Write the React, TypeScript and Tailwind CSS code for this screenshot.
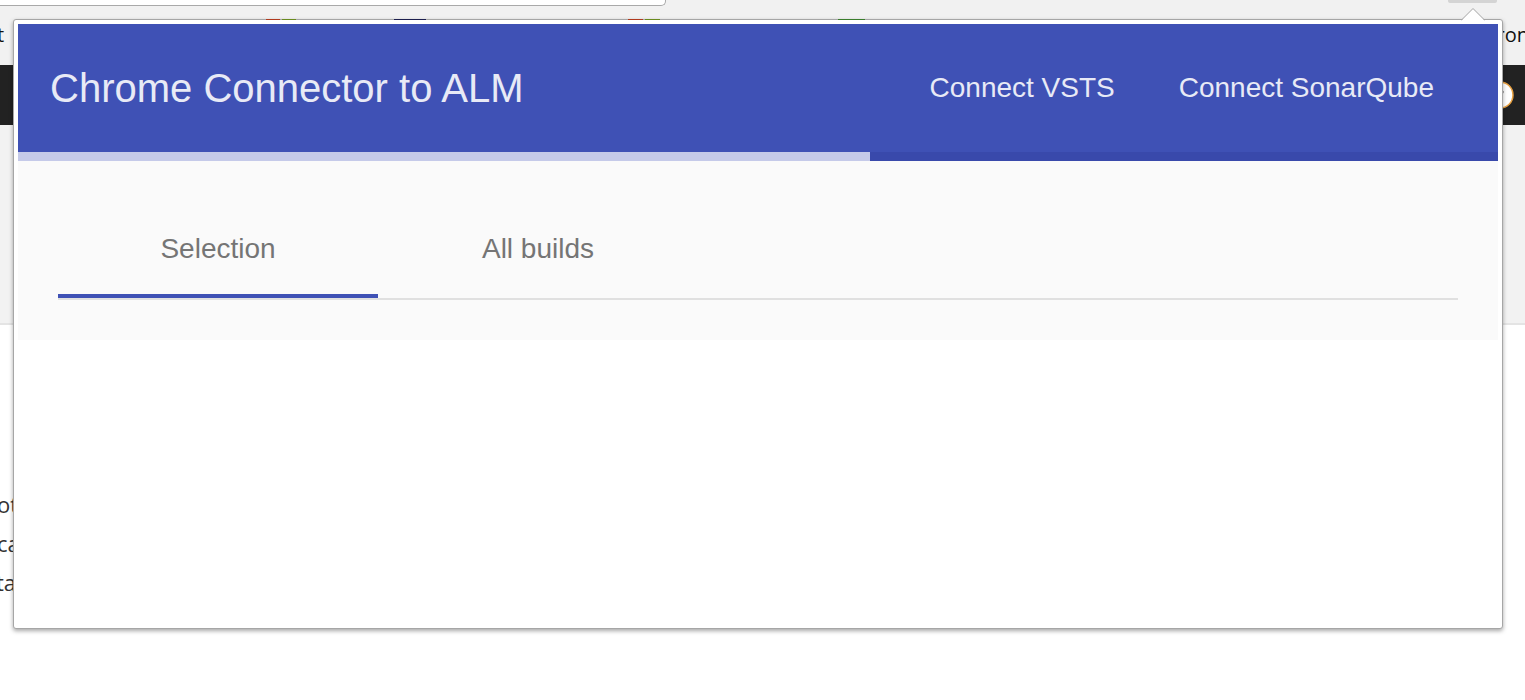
import React from "react";

export default function App() {
  return (
    <div className="relative w-[1525px] h-[700px] overflow-hidden bg-white font-['Liberation_Sans',Arial,sans-serif]">
      {/* background page */}
      <div className="flex flex-col">
        <div className="h-[65px] bg-[#f1f1f1] flex flex-col">
          <div className="w-[666px] h-[6px] bg-white border-b border-r border-[#a9a9a9] rounded-br-[5px]" />
          <div className="flex justify-between items-center mt-[17px] text-[20px] leading-[24px] text-[#111] font-['Open_Sans',sans-serif]">
            <span className="-ml-[3px]">t</span>
            <span className="-mr-[4px]">ron</span>
          </div>
        </div>
        <div className="h-[60px] bg-[#222222] flex justify-end items-center">
          <svg width="30" height="30" viewBox="0 0 30 30" className="mr-[10px]">
            <circle cx="15" cy="15" r="13" fill="#ffffff" stroke="#e8a040" strokeWidth="1.5" />
            <path d="M8 11 a5 5 0 0 1 9 1 c0 3 -4 3 -4 6" fill="none" stroke="#222" strokeWidth="3" />
          </svg>
        </div>
        <div className="h-[200px] bg-[#f2f2f2] border-b-2 border-[#e4e4e4]" />
        <div className="pt-[160px] text-[22px] leading-[39px] text-[#333] font-['Open_Sans',sans-serif] flex flex-col">
          <span className="-ml-[3px]">ot</span>
          <span className="-ml-[3px]">ca</span>
          <span className="-ml-[4px]">ta</span>
        </div>
      </div>

      {/* toolbar button behind popup */}
      <div className="absolute left-[1448px] top-0 w-[49px] h-[3px] bg-[#d4d4d4] rounded-b-[2px]" />

      {/* popup */}
      <div className="absolute left-[13px] top-[19px] w-[1490px] h-[610px] bg-white border border-[#a6a6a6] rounded-[3px] p-[4px] shadow-[0_2px_4px_rgba(0,0,0,0.35)] flex flex-col">
        {/* icon tips peeking over border */}
        <span className="absolute -top-[1px] left-[252px] w-[14px] h-[1px] bg-[#b03a1e]" />
        <span className="absolute -top-[1px] left-[268px] w-[14px] h-[1px] bg-[#6a8a1e]" />
        <span className="absolute -top-[1px] left-[380px] w-[32px] h-[1px] bg-[#1c1f4e]" />
        <span className="absolute -top-[1px] left-[614px] w-[15px] h-[1px] bg-[#b03a1e]" />
        <span className="absolute -top-[1px] left-[631px] w-[15px] h-[1px] bg-[#6a8a1e]" />
        <span className="absolute -top-[1px] left-[824px] w-[27px] h-[1px] bg-[#3a7d2c]" />
        {/* arrow */}
        <svg width="24" height="13" viewBox="0 0 24 13" className="absolute -top-[12px] left-[1447px]">
          <path d="M0 13 L12 1 L24 13 Z" fill="#ffffff" />
          <path d="M0 12.5 L12 0.5 L24 12.5" fill="none" stroke="#a6a6a6" strokeWidth="1" />
        </svg>

        <header className="h-[128px] bg-[#3f51b5] flex items-center justify-between px-[32px] text-[#e8eaf6]">
          <h1 className="text-[40px] leading-[46px]">Chrome Connector to ALM</h1>
          <nav className="flex items-center">
            <a className="px-[32px] text-[28px] leading-[32px]">Connect VSTS</a>
            <a className="px-[32px] text-[28px] leading-[32px]">Connect SonarQube</a>
          </nav>
        </header>
        <div className="h-[9px] flex">
          <div className="w-[852px] bg-[#c5cae9]" />
          <div className="flex-1 bg-[#3949ab]" />
        </div>
        <div className="bg-[#fafafa] px-[40px] pt-[40px] pb-[40px]">
          <div className="flex border-b-2 border-[#e0e0e0]">
            <div className="w-[320px] h-[97px] pt-[2px] border-b-4 border-[#3f51b5] flex items-center justify-center text-[28px] leading-[32px] text-[#757575]">
              Selection
            </div>
            <div className="w-[320px] h-[97px] pt-[2px] border-b-4 border-transparent flex items-center justify-center text-[28px] leading-[32px] text-[#757575]">
              All builds
            </div>
          </div>
        </div>
        <div className="flex-1 bg-white" />
      </div>
    </div>
  );
}
